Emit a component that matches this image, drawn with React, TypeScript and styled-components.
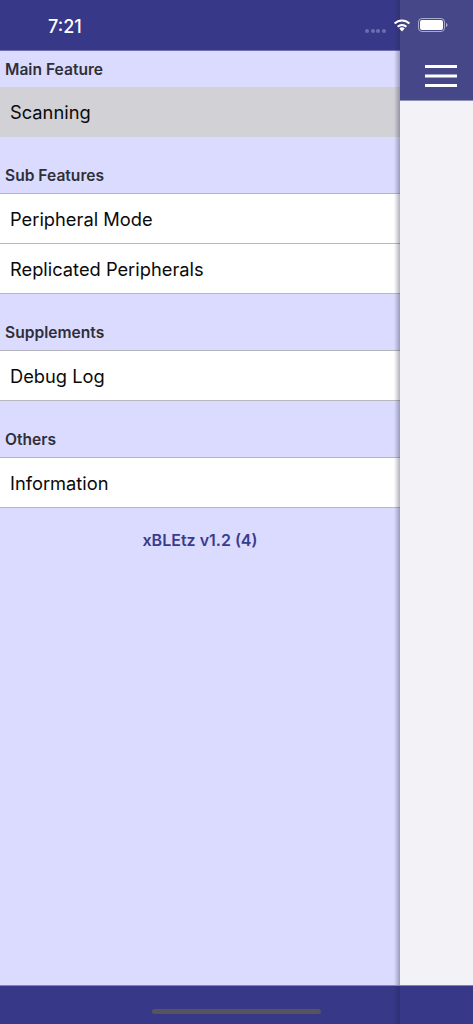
import React from "react";
import styled, { createGlobalStyle } from "styled-components";

const GlobalStyle = createGlobalStyle`
  html, body {
    margin: 0;
    padding: 0;
    background: #f2f2f7;
  }

  * {
    box-sizing: border-box;
  }
`;

const Phone = styled.div`
  position: relative;
  width: 473px;
  height: 1024px;
  display: flex;
  flex-direction: column;
  overflow: hidden;
  font-family: "Inter", "Liberation Sans", sans-serif;
`;

const Columns = styled.div`
  flex: 1;
  display: grid;
  grid-template-columns: 400px 1fr;
  min-height: 0;
`;

const Drawer = styled.div`
  position: relative;
  background: #dbdbff;

  &::after {
    content: "";
    position: absolute;
    top: 0;
    bottom: 0;
    right: 0;
    width: 6px;
    background: linear-gradient(to right, rgba(40, 40, 70, 0), rgba(40, 40, 70, 0.36));
  }
`;

const DrawerTop = styled.div`
  height: 51px;
  background: #373888;
  border-bottom: 1px solid #6e6fb0;
`;

const Section = styled.section<{ $first?: boolean }>`
  padding-top: ${({ $first }) => ($first ? "0" : "29px")};
`;

const SectionTitle = styled.h2`
  margin: 0;
  height: 20px;
  padding-left: 5px;
  font-size: 15.6px;
  line-height: 20px;
  font-weight: 600;
  color: #2f2f38;
`;

const TitleRow = styled.div<{ $first?: boolean }>`
  padding-top: ${({ $first }) => ($first ? "9px" : "0")};
  padding-bottom: 7px;
  border-bottom: ${({ $first }) => ($first ? "0" : "1px solid #b4b4bc")};
`;

const Row = styled.div<{ $selected?: boolean }>`
  height: 50px;
  padding-left: 10px;
  display: flex;
  align-items: center;
  font-size: 18.3px;
  color: #0a0a0a;
  background: ${({ $selected }) => ($selected ? "#d1d1d6" : "#ffffff")};
  border-bottom: ${({ $selected }) => ($selected ? "0" : "1px solid #b8b8bc")};
`;

const Version = styled.div`
  margin-top: 22px;
  text-align: center;
  font-size: 16px;
  line-height: 20px;
  font-weight: 600;
  color: #3a3b8c;
`;

const Main = styled.div`
  display: flex;
  flex-direction: column;
  background: #f2f2f7;
`;

const NavBar = styled.div`
  height: 101px;
  padding: 65px 16px 0 0;
  display: flex;
  justify-content: flex-end;
  align-items: flex-start;
  background: #454789;
  border-bottom: 1px solid #8f90b8;
`;

const MenuIcon = styled.svg`
  display: block;
  width: 32px;
  height: 23px;
`;

const Footer = styled.div`
  height: 39px;
  display: grid;
  grid-template-columns: 400px 1fr;
  background: #373888;
  border-top: 1px solid #8082bb;
`;

const FooterLeft = styled.div`
  background: linear-gradient(to right, transparent 393px, rgba(20, 20, 60, 0.25) 400px);
`;

const HomeIndicator = styled.div`
  position: absolute;
  left: 152px;
  bottom: 10px;
  width: 169px;
  height: 5px;
  border-radius: 3px;
  background: #55555c;
`;

const StatusBar = styled.div`
  position: absolute;
  top: 0;
  left: 0;
  right: 0;
  height: 50px;
  display: flex;
  align-items: center;
  padding: 0 25px 0 48px;
  color: #ffffff;
`;

const Clock = styled.span`
  flex: 1;
  margin-top: 2px;
  font-size: 18px;
  font-weight: 500;
`;

const SignalDots = styled.div`
  display: flex;
  gap: 1.6px;
  margin: 11px 7px 0 0;

  span {
    width: 4px;
    height: 4px;
    border-radius: 50%;
    background: #6c6eae;
  }
`;

const WifiIcon = styled.svg`
  display: block;
  width: 18px;
  height: 14px;
  margin-right: 7px;
`;

const BatteryIcon = styled.svg`
  display: block;
  width: 30px;
  height: 14px;
`;

const App = () => {
  return (
    <Phone>
      <GlobalStyle />
      <Columns>
        <Drawer>
          <DrawerTop />
          <Section $first>
            <TitleRow $first>
              <SectionTitle>Main Feature</SectionTitle>
            </TitleRow>
            <Row $selected>Scanning</Row>
          </Section>
          <Section>
            <TitleRow>
              <SectionTitle>Sub Features</SectionTitle>
            </TitleRow>
            <Row>Peripheral Mode</Row>
            <Row>Replicated Peripherals</Row>
          </Section>
          <Section>
            <TitleRow>
              <SectionTitle>Supplements</SectionTitle>
            </TitleRow>
            <Row>Debug Log</Row>
          </Section>
          <Section>
            <TitleRow>
              <SectionTitle>Others</SectionTitle>
            </TitleRow>
            <Row>Information</Row>
          </Section>
          <Version>xBLEtz v1.2 (4)</Version>
        </Drawer>
        <Main>
          <NavBar>
            <MenuIcon viewBox="0 0 32 23">
              <rect x="0" y="0" width="32" height="3" fill="#ffffff" />
              <rect x="0" y="9.5" width="32" height="3" fill="#ffffff" />
              <rect x="0" y="19" width="32" height="3" fill="#ffffff" />
            </MenuIcon>
          </NavBar>
        </Main>
      </Columns>
      <Footer>
        <FooterLeft />
      </Footer>
      <HomeIndicator />
      <StatusBar>
        <Clock>7:21</Clock>
        <SignalDots>
          <span />
          <span />
          <span />
          <span />
        </SignalDots>
        <WifiIcon viewBox="0 0 18 14">
          <path d="M9 13.6 6.3 10.6a3.8 3.8 0 0 1 5.4 0Z" fill="#fff" />
          <path d="M4.6 8.8a6.3 6.3 0 0 1 8.8 0" fill="none" stroke="#fff" strokeWidth="2" />
          <path d="M1.6 5.5a10.5 10.5 0 0 1 14.8 0" fill="none" stroke="#fff" strokeWidth="2" />
        </WifiIcon>
        <BatteryIcon viewBox="0 0 30 14">
          <rect x="0.5" y="0.5" width="26" height="13" rx="3.5" fill="none" stroke="#a9aad0" />
          <rect x="2" y="2" width="23" height="10" rx="2" fill="#fff" />
          <path d="M28 5v4c.9-.3 1.5-1.1 1.5-2s-.6-1.7-1.5-2Z" fill="#a9aad0" />
        </BatteryIcon>
      </StatusBar>
    </Phone>
  );
};

export default App;
